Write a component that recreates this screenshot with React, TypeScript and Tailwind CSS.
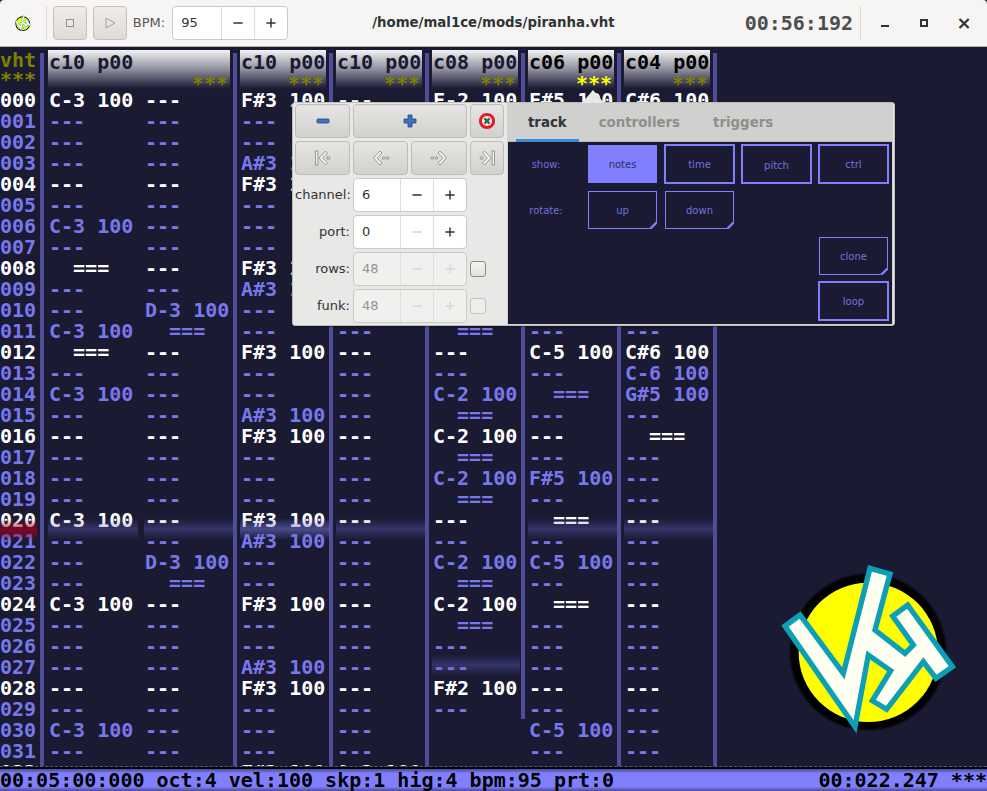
import { Minus, Plus } from 'lucide-react';

const MONO = "font-['DejaVu_Sans_Mono',monospace]";
const SANS = "font-['DejaVu_Sans',sans-serif]";
const ROW_COUNT = 33;
const BEAT_EVERY = 4;

type Cells = Record<number, string>;

const column = (cells: Cells, fallback = '---', count = ROW_COUNT): string[] =>
  Array.from({ length: count }, (_, i) => cells[i] ?? (i === 32 ? '' : fallback));

const NOTE_OFF = '  ===';

const TRACKS: { title: string; active?: boolean; bright?: boolean; columns: string[][] }[] = [
  {
    title: 'c10 p00',
    columns: [
      column({ 0: 'C-3 100', 6: 'C-3 100', 8: NOTE_OFF, 11: 'C-3 100', 12: NOTE_OFF, 14: 'C-3 100', 20: 'C-3 100', 24: 'C-3 100', 30: 'C-3 100' }),
      column({ 10: 'D-3 100', 11: NOTE_OFF, 22: 'D-3 100', 23: NOTE_OFF }),
    ],
  },
  {
    title: 'c10 p00',
    columns: [
      column({ 0: 'F#3 100', 3: 'A#3 100', 4: 'F#3 100', 8: 'F#3 100', 9: 'A#3 100', 12: 'F#3 100', 15: 'A#3 100', 16: 'F#3 100', 20: 'F#3 100', 21: 'A#3 100', 24: 'F#3 100', 27: 'A#3 100', 28: 'F#3 100', 32: 'F#3 100' }),
    ],
  },
  { title: 'c10 p00', columns: [column({ 32: 'A-3 100' })] },
  {
    title: 'c08 p00',
    columns: [
      column({ 0: 'F-2 100', 11: NOTE_OFF, 14: 'C-2 100', 15: NOTE_OFF, 16: 'C-2 100', 17: NOTE_OFF, 18: 'C-2 100', 19: NOTE_OFF, 22: 'C-2 100', 23: NOTE_OFF, 24: 'C-2 100', 25: NOTE_OFF, 28: 'F#2 100', 30: '', 31: '' }),
    ],
  },
  {
    title: 'c06 p00',
    active: true,
    bright: true,
    columns: [
      column({ 0: 'F#5 100', 12: 'C-5 100', 14: NOTE_OFF, 18: 'F#5 100', 20: NOTE_OFF, 22: 'C-5 100', 24: NOTE_OFF, 30: 'C-5 100' }),
    ],
  },
  {
    title: 'c04 p00',
    bright: true,
    columns: [column({ 0: 'C#6 100', 12: 'C#6 100', 13: 'C-6 100', 14: 'G#5 100', 16: NOTE_OFF })],
  },
];

const Separator = ({ short }: { short?: boolean }) => (
  <div className={`mt-[6px] w-[4px] shrink-0 bg-[#4d4d99] ${short ? 'h-[666px]' : 'h-[714px]'}`} />
);

const Row = ({ text, index }: { text: string; index: number }) => (
  <div className={`h-[21px] whitespace-pre leading-[23px] ${index % BEAT_EVERY === 0 ? 'text-white' : 'text-[#7878ec]'}`}>
    {text}
  </div>
);

const PlayBar = ({ className }: { className: string }) => (
  <div className={`absolute left-0 h-[22px] bg-gradient-to-b from-transparent to-transparent ${className}`} />
);

const VhtLogo = ({ className, viewBox = '0 0 660 600' }: { className: string; viewBox?: string }) => (
  <svg className={className} viewBox={viewBox}>
    <defs>
      <filter id="logo-shadow" x="-20%" y="-20%" width="140%" height="140%">
        <feGaussianBlur stdDeviation="3" />
      </filter>
    </defs>
    <circle cx="324" cy="306" r="234" fill="#000" filter="url(#logo-shadow)" />
    <circle cx="325" cy="307" r="209" fill="#ffff00" />
    <polygon
      points="75,228 120,195 250,370 330,55 390,72 345,240 435,310 460,285 398,198 443,165 577,350 528,385 490,335 380,478 337,452 392,362 325,315 285,530"
      fill="#fffff2"
      stroke="#0c9fb6"
      strokeWidth="16"
      strokeLinejoin="miter"
      strokeMiterlimit="10"
    />
  </svg>
);

const HeaderButton = ({ children }: { children: React.ReactNode }) => (
  <button
    type="button"
    className="flex h-[34px] w-[34px] items-center justify-center rounded-[4px] border border-[#c4c0bb] bg-gradient-to-b from-[#eeeceb] to-[#dedbd8]"
  >
    {children}
  </button>
);

const SpinButton = ({
  value,
  widthClass,
  disabled,
  minusDisabled,
}: {
  value: string;
  widthClass: string;
  disabled?: boolean;
  minusDisabled?: boolean;
}) => (
  <div
    className={`flex h-[34px] items-stretch rounded-[4px] border border-[#cdc9c5] ${SANS} text-[13px] ${
      disabled ? 'bg-[#f0f0ef] text-[#949494]' : 'bg-white text-[#2e3436]'
    } ${widthClass}`}
  >
    <span className="flex flex-1 items-center pl-[8px]">{value}</span>
    <span className="flex w-[33px] items-center justify-center border-l border-[#e0dedc]">
      <Minus size={14} strokeWidth={2.5} className={disabled || minusDisabled ? 'text-[#d6d6d4]' : 'text-[#2e3436]'} />
    </span>
    <span className="flex w-[33px] items-center justify-center border-l border-[#e0dedc]">
      <Plus size={14} strokeWidth={2.5} className={disabled ? 'text-[#d6d6d4]' : 'text-[#2e3436]'} />
    </span>
  </div>
);

const PopButton = ({ widthClass, children }: { widthClass: string; children: React.ReactNode }) => (
  <button
    type="button"
    className={`flex h-[34px] items-center justify-center rounded-[4px] border border-[#bfbcb8] bg-gradient-to-b from-[#e6e5e3] to-[#d3d1ce] ${widthClass}`}
  >
    {children}
  </button>
);

const NavIcon = ({ flip, bar }: { flip?: boolean; bar?: boolean }) => (
  <svg width="18" height="18" viewBox="0 0 18 18" className={flip ? '-scale-x-100' : ''} fill="#f2f2f0" stroke="#8e8e8b" strokeWidth="0.9">
    {bar ? (
      <>
        <rect x="1.5" y="2" width="2.4" height="14" />
        <path d="M5 9 L11.5 2 L13.5 4 L8.6 9 L13.5 14 L11.5 16 Z" />
        <circle cx="14.4" cy="9" r="1.5" fill="none" />
      </>
    ) : (
      <>
        <path d="M1.5 9 L8 2 L10 4 L5.1 9 L10 14 L8 16 Z" />
        <circle cx="11.7" cy="9" r="1.3" fill="none" />
        <circle cx="15.7" cy="9" r="1.3" fill="none" />
      </>
    )}
  </svg>
);

const MinusIcon = () => (
  <svg width="14" height="6" viewBox="0 0 14 6">
    <rect x="1" y="1" width="12" height="4" rx="1" fill="#3f73ba" stroke="#204a87" strokeWidth="0.8" />
  </svg>
);

const PlusIcon = () => (
  <svg width="14" height="14" viewBox="0 0 14 14">
    <path d="M5 1 H9 V5 H13 V9 H9 V13 H5 V9 H1 V5 H5 Z" fill="#3f73ba" stroke="#204a87" strokeWidth="0.8" strokeLinejoin="round" />
  </svg>
);

const CloseIcon = () => (
  <svg width="18" height="18" viewBox="0 0 18 18">
    <circle cx="9" cy="9" r="6.6" fill="#f6f6f4" stroke="#e01b24" strokeWidth="3" />
    <path d="M6.4 6.4 L11.6 11.6 M11.6 6.4 L6.4 11.6" stroke="#555753" strokeWidth="2.4" />
  </svg>
);

const ToggleCell = ({
  label,
  variant = 'thick',
  corner,
  className = '',
}: {
  label: string;
  variant?: 'thick' | 'thin' | 'filled';
  corner?: boolean;
  className?: string;
}) => {
  const look =
    variant === 'filled'
      ? 'm-px bg-[#8080ff] text-[#2b2b66]'
      : variant === 'thin'
        ? 'm-px border border-[#8080ff] text-[#7272dc]'
        : 'border-2 border-[#8080ff] text-[#7272dc]';
  return (
    <div className={`relative flex items-center justify-center text-[10px] ${look} ${className}`}>
      {label}
      {corner && (
        <svg className="absolute -bottom-px -right-px" width="8" height="8" viewBox="0 0 8 8">
          <polygon points="8,0 8,8 0,8" fill="#1a1a33" />
          <line x1="8" y1="1" x2="1" y2="8" stroke="#8080ff" strokeWidth="2.4" />
        </svg>
      )}
    </div>
  );
};

const TrackPanel = () => (
  <div className="flex w-[386px] flex-col bg-[#d0d0ce] p-px">
    <div className={`flex h-[38px] items-stretch gap-[20px] border-b border-[#b8b8b5] pl-[8px] ${SANS} text-[13.33px] font-bold`}>
      <span className="flex h-[38px] items-center border-b-[3px] border-[#3f8ad0] px-[12px] pt-[3px] text-[#2e3436]">track</span>
      <span className="flex items-center text-[#8e8e8c]">controllers</span>
      <span className="ml-[13px] flex items-center text-[#8e8e8c]">triggers</span>
    </div>
    <div className={`grid flex-1 grid-cols-[73px_71px_71px_71px_71px] grid-rows-[40px_40px_40px_40px] content-start justify-start gap-[6px] bg-[#1a1a33] pt-[2px] ${SANS}`}>
      <span className="flex items-center justify-center pl-[3px] text-[10px] text-[#7272dc]">show:</span>
      <ToggleCell label="notes" variant="filled" />
      <ToggleCell label="time" />
      <ToggleCell label="pitch" className="pt-[2px]" />
      <ToggleCell label="ctrl" />
      <span className="flex items-center justify-center pl-[3px] text-[10px] text-[#7272dc]">rotate:</span>
      <ToggleCell label="up" variant="thin" corner />
      <ToggleCell label="down" variant="thin" corner />
      <ToggleCell label="clone" variant="thin" corner className="col-start-5 row-start-3" />
      <ToggleCell label="loop" className="col-start-5 row-start-4 -mt-px mb-px" />
    </div>
  </div>
);

const TrackPopover = () => (
  <div className="absolute left-[292px] top-[55px] flex h-[224px] w-[603px] rounded-[3px] border border-[#bdbdba] bg-[#e8e8e6] font-normal shadow-[0_1px_2px_#0006]">
    <svg className="absolute -top-[13px] left-[289px]" width="22" height="13" viewBox="0 0 22 13">
      <polygon points="11,0 22,13 0,13" fill="#e8e8e6" />
    </svg>
    <div className={`flex w-[214px] flex-col gap-[3px] pl-[2px] pt-[1px] ${SANS} text-[13px] text-[#2e3436]`}>
      <div className="flex gap-[3px]">
        <PopButton widthClass="w-[55px]"><MinusIcon /></PopButton>
        <PopButton widthClass="w-[114px]"><PlusIcon /></PopButton>
        <PopButton widthClass="w-[34px]"><CloseIcon /></PopButton>
      </div>
      <div className="flex gap-[3px]">
        <PopButton widthClass="w-[55px]"><NavIcon bar /></PopButton>
        <PopButton widthClass="w-[55px]"><NavIcon /></PopButton>
        <PopButton widthClass="w-[56px]"><NavIcon flip /></PopButton>
        <PopButton widthClass="w-[34px]"><NavIcon flip bar /></PopButton>
      </div>
      {[
        { label: 'channel:', value: '6' },
        { label: 'port:', value: '0', minusDisabled: true },
        { label: 'rows:', value: '48', disabled: true, check: 'on' },
        { label: 'funk:', value: '48', disabled: true, check: 'off' },
      ].map((row) => (
        <div key={row.label} className="flex items-center gap-[3px]">
          <span className="w-[55px] whitespace-nowrap text-right">{row.label}</span>
          <SpinButton value={row.value} widthClass="w-[114px]" disabled={row.disabled} minusDisabled={row.minusDisabled} />
          {row.check && (
            <span
              className={`h-[16px] w-[16px] rounded-[3px] border ${
                row.check === 'on' ? 'border-[#8d8a86] bg-gradient-to-b from-[#f4f4f3] to-[#e2e1df]' : 'border-[#c4c2bf] bg-[#eeeeec]'
              }`}
            />
          )}
        </div>
      ))}
    </div>
    <TrackPanel />
  </div>
);

export default function App() {
  return (
    <div className={`flex h-[791px] w-[987px] flex-col overflow-hidden bg-[#1a1a33] ${MONO}`}>
      <header className={`flex h-[47px] shrink-0 items-center rounded-t-[4px] border-b border-[#b6b3af] bg-[#f6f5f4] ${SANS} text-[#2e3436]`}>
        <VhtLogo className="ml-[14px] h-[17px] w-[18px]" viewBox="50 30 560 540" />
        <div className="ml-[14px] h-[34px] w-px bg-[#dcd9d6]" />
        <div className="ml-[6px] flex gap-[6px]">
          <HeaderButton>
            <span className="h-[8px] w-[8px] border border-[#8f8f8d] bg-[#e8e8e6]" />
          </HeaderButton>
          <HeaderButton>
            <svg width="12" height="12" viewBox="0 0 12 12" fill="none" stroke="#a3a3a0">
              <polygon points="2,1 11,6 2,11" />
            </svg>
          </HeaderButton>
        </div>
        <span className="ml-[6px] text-[13px] text-[#555753]">BPM:</span>
        <SpinButton value="95" widthClass="ml-[7px] w-[117px]" />
        <span className="ml-[84px] text-[13.33px] font-bold">/home/mal1ce/mods/piranha.vht</span>
        <span className={`ml-[130px] text-[20px] font-bold text-[#4b4f50] ${MONO}`}>00:56:192</span>
        <div className="ml-[7px] h-[34px] w-px bg-[#dcd9d6]" />
        <div className="flex flex-1 items-center">
          <span className="flex w-[46px] justify-center pl-[1px] pt-[6px]">
            <span className="h-[2px] w-[8px] bg-[#2e3436]" />
          </span>
          <span className="flex w-[34px] justify-center">
            <span className="h-[8px] w-[8px] border-2 border-[#2e3436]" />
          </span>
          <span className="flex w-[46px] justify-center text-[18px] font-bold leading-none">×</span>
        </div>
      </header>

      <main className="relative flex h-[720px] shrink-0 overflow-hidden border-b border-dashed border-[#5a5a70] text-[20px] font-bold">
        <div className="relative w-[40px] shrink-0">
          <div className="h-[21px] leading-[26px] text-[#808000]">vht</div>
          <div className="h-[21px] leading-[23px] text-[#808000]">***</div>
          {Array.from({ length: ROW_COUNT }, (_, i) => (
            <Row key={i} index={i} text={String(i).padStart(3, '0')} />
          ))}
          <PlayBar className="top-[472px] w-[37px] via-[#a00020c0]" />
        </div>
        <Separator />
        {TRACKS.map((track, t) => (
          <div key={t} className="flex shrink-0">
            <div className={`relative ${t === 0 ? 'ml-[4px]' : 'ml-[3px]'} ${track.columns.length > 1 ? 'w-[185px]' : 'w-[89px]'}`}>
              <div className="mr-[3px] mt-[3px] h-[39px] bg-gradient-to-b from-[#f4f4f4] via-[#8f8f9c] to-[#1a1a33]">
                <div className={`h-[21px] whitespace-pre pl-px leading-[24px] ${track.bright ? 'text-black' : 'text-[#1a1a33]'}`}>
                  {track.title}
                </div>
                <div className={`h-[18px] pr-[2px] text-right leading-[25px] ${track.active ? 'text-[#ffff00]' : 'text-[#808000]'}`}>***</div>
              </div>
              <div className="flex">
                {track.columns.map((cells, c) => (
                  <div key={c} className="relative w-[96px] shrink-0 pl-px">
                    {cells.map((text, i) => (
                      <Row key={i} index={i} text={text} />
                    ))}
                    {t === 3 ? (
                      <PlayBar className="top-[565px] w-[88px] via-[#6060c060]" />
                    ) : (
                      <PlayBar className={`top-[429px] w-[90px] ${t === 1 ? 'via-[#7070d090]' : 'via-[#6060c060]'}`} />
                    )}
                  </div>
                ))}
              </div>
            </div>
            <Separator short={t === 3} />
          </div>
        ))}
        <VhtLogo className="absolute left-[760px] top-[503px] h-[200px] w-[220px]" />
        <TrackPopover />
      </main>

      <footer className="flex h-[24px] shrink-0 items-center justify-between whitespace-pre border-t-2 border-black bg-[linear-gradient(#4a4a99,#8080ff_20%,#8080ff_80%,#4a4a99)] text-[20px] font-bold leading-[21px] text-black">
        <span>00:05:00:000 oct:4 vel:100 skp:1 hig:4 bpm:95 prt:0</span>
        <span>00:022.247 ***</span>
      </footer>
    </div>
  );
}
